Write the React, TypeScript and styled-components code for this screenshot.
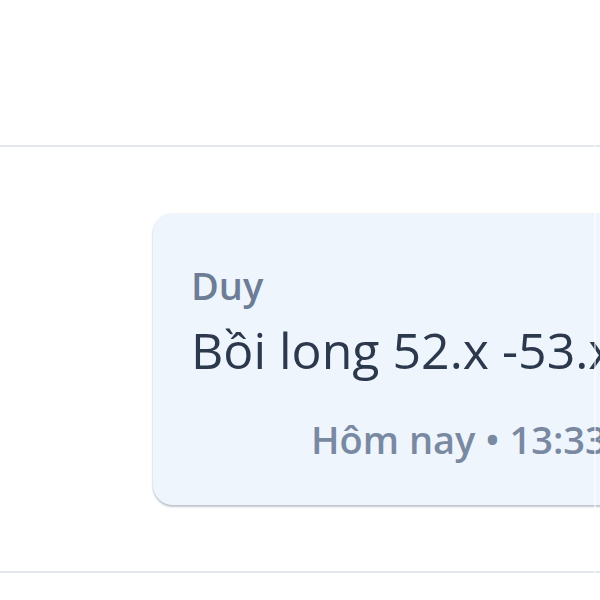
import styled, { createGlobalStyle } from "styled-components";

const GlobalStyle = createGlobalStyle`
  html, body {
    margin: 0;
    padding: 0;
    background: #ffffff;
    overflow: hidden;
  }
  body {
    font-family: "Open Sans", "Noto Sans", sans-serif;
  }
`;

const Page = styled.div`
  width: 600px;
  height: 600px;
  overflow: hidden;
  position: relative;
`;

// faint seam down the right side of the capture
const Seam = styled.div`
  position: absolute;
  top: 0;
  bottom: 0;
  left: 594px;
  width: 2px;
  background: rgba(255, 255, 255, 0.55);
`;

const TopBar = styled.header`
  height: 145px;
  border-bottom: 2px solid #e3e7ed;
`;

const Thread = styled.section`
  display: flex;
  padding: 67px 0 66px 153px;
  border-bottom: 2px solid #e3e7ed;
`;

const Bubble = styled.div`
  flex: 0 0 auto;
  width: 600px;
  background: #eff5fd;
  border-radius: 20px;
  padding: 48px 40px 43px 38px;
  box-sizing: border-box;
  box-shadow: 0 2px 2px rgba(110, 120, 135, 0.4), 0 0 2px rgba(120, 130, 145, 0.25);
  display: flex;
  flex-direction: column;
`;

const Author = styled.div`
  font-size: 38px;
  font-weight: 600;
  color: #6d7d95;
  line-height: 46px;
`;

const Text = styled.div`
  font-size: 50px;
  font-weight: 400;
  color: #2c394d;
  line-height: 64px;
  white-space: nowrap;
  margin-top: 10px;
`;

const Meta = styled.div`
  font-size: 38px;
  font-weight: 600;
  color: #7989a1;
  line-height: 46px;
  white-space: nowrap;
  margin-top: 34px;
  padding-left: 120px;
`;

export default function App() {
  return (
    <Page>
      <GlobalStyle />
      <TopBar />
      <Thread>
        <Bubble>
          <Author>Duy</Author>
          <Text>Bồi long 52.x -53.x</Text>
          <Meta>Hôm nay • 13:33</Meta>
        </Bubble>
      </Thread>
      <Seam />
    </Page>
  );
}
